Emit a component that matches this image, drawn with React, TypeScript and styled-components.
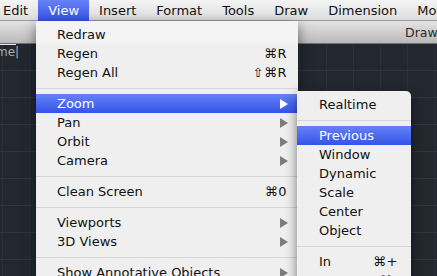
import * as React from "react";
import styled, { createGlobalStyle } from "styled-components";

const ui = `"DejaVu Sans", "Liberation Sans", sans-serif`;
const blueBar = `linear-gradient(#6782f7, #3453e9)`;

const Global = createGlobalStyle`
  html, body {
    margin: 0;
    padding: 0;
    width: 437px;
    height: 276px;
    overflow: hidden;
    background: #232830;
  }
`;

const Screen = styled.div`
  position: relative;
  width: 437px;
  height: 276px;
  overflow: hidden;
  display: flex;
  flex-direction: column;
  font-family: ${ui};
  font-size: 13px;
  color: #111;
`;

const MenuBar = styled.div`
  display: flex;
  height: 21px;
  flex: none;
  margin-left: -7px;
  background: linear-gradient(#f4f4f4, #dedede);
  border-bottom: 1px solid #9a9a9a;
  box-sizing: border-box;
  white-space: nowrap;
`;

const BarItem = styled.div<{ $active?: boolean }>`
  display: flex;
  align-items: center;
  padding: 0 10px;
  height: 21px;
  color: ${(p) => (p.$active ? "#fff" : "#111")};
  background: ${(p) => (p.$active ? blueBar : "none")};
`;

const Window = styled.div`
  flex: 1;
  display: flex;
  flex-direction: column;
`;

const TitleBar = styled.div`
  height: 22px;
  flex: none;
  display: flex;
  align-items: center;
  padding-left: 405px;
  white-space: nowrap;
  overflow: hidden;
  background: linear-gradient(#e4e4e4, #b9b9b9);
  border-bottom: 1px solid #6f6f6f;
  color: #2a2a2a;
  font-size: 12.5px;
`;

const Canvas = styled.div`
  flex: 1;
  position: relative;
  background-color: #232830;
  background-image: linear-gradient(#2f343d 1px, transparent 1px),
    linear-gradient(90deg, #2b3039 1px, transparent 1px);
  background-size: 27px 27px;
  background-position: 0 -1px, 2px 0;
`;

const CmdField = styled.div`
  padding-top: 1px;
  margin-left: -4px;
  width: 20px;
  color: #a6abb3;
  font-size: 12px;
  border-top: 1px solid #e8e8e8;
  line-height: 13px;
`;

const Menu = styled.div<{ $top: number; $left: number; $width: number }>`
  position: absolute;
  top: ${(p) => p.$top}px;
  left: ${(p) => p.$left}px;
  width: ${(p) => p.$width}px;
  padding-top: 4px;
  background: rgba(244, 244, 244, 0.98);
  box-shadow: 0 4px 12px rgba(0, 0, 0, 0.5);
  box-sizing: border-box;
`;

const SubMenu = styled(Menu)`
  border-radius: 0 5px 0 0;
`;

const Row = styled.div<{ $active?: boolean; $pad: number }>`
  display: flex;
  align-items: center;
  height: 19px;
  padding-left: ${(p) => p.$pad}px;
  padding-right: 10px;
  white-space: nowrap;
  color: ${(p) => (p.$active ? "#fff" : "#111")};
  background: ${(p) => (p.$active ? blueBar : "none")};
`;

const Label = styled.span`
  flex: 1;
`;

const Key = styled.span<{ $right: number }>`
  margin-right: ${(p) => p.$right}px;
  letter-spacing: 0.5px;
`;

const Sep = styled.div`
  height: 12px;
  display: flex;
  align-items: center;
  &::after {
    content: "";
    flex: 1;
    height: 1px;
    background: #d6d6d6;
  }
`;

const Arrow = ({ white }: { white?: boolean }) => (
  <svg width="8" height="10" viewBox="0 0 8 10">
    <path d="M0 0 L8 5 L0 10 Z" fill={white ? "#fff" : "#7d7d7d"} />
  </svg>
);

type Item =
  | { sep: true }
  | { label: string; key?: string; sub?: boolean; active?: boolean };

const viewItems: Item[] = [
  { label: "Redraw" },
  { label: "Regen", key: "⌘R" },
  { label: "Regen All", key: "⇧⌘R" },
  { sep: true },
  { label: "Zoom", sub: true, active: true },
  { label: "Pan", sub: true },
  { label: "Orbit", sub: true },
  { label: "Camera", sub: true },
  { sep: true },
  { label: "Clean Screen", key: "⌘0" },
  { sep: true },
  { label: "Viewports", sub: true },
  { label: "3D Views", sub: true },
  { sep: true },
  { label: "Show Annotative Objects", sub: true },
];

const zoomItems: Item[] = [
  { label: "Realtime" },
  { sep: true },
  { label: "Previous", active: true },
  { label: "Window" },
  { label: "Dynamic" },
  { label: "Scale" },
  { label: "Center" },
  { label: "Object" },
  { sep: true },
  { label: "In", key: "⌘+" },
  { label: "Out", key: "⌘-" },
];

const renderItems = (items: Item[], pad: number, keyRight: number) =>
  items.map((it, i) =>
    "sep" in it ? (
      <Sep key={i} />
    ) : (
      <Row key={i} $pad={pad} $active={it.active}>
        <Label>{it.label}</Label>
        {it.key && <Key $right={keyRight}>{it.key}</Key>}
        {it.sub && <Arrow white={it.active} />}
      </Row>
    )
  );

export default function App() {
  const bar = ["Edit", "View", "Insert", "Format", "Tools", "Draw", "Dimension", "Modify"];
  return (
    <Screen>
      <Global />
      <MenuBar>
        {bar.map((b) => (
          <BarItem key={b} $active={b === "View"}>
            {b}
          </BarItem>
        ))}
      </MenuBar>
      <Window>
        <TitleBar>Drawing1.dwg</TitleBar>
        <Canvas>
          <CmdField>me|</CmdField>
        </Canvas>
      </Window>
      <Menu $top={21} $left={36} $width={262}>
        {renderItems(viewItems, 21, 1)}
      </Menu>
      <SubMenu $top={91} $left={297} $width={114}>
        {renderItems(zoomItems, 22, 3)}
      </SubMenu>
    </Screen>
  );
}
